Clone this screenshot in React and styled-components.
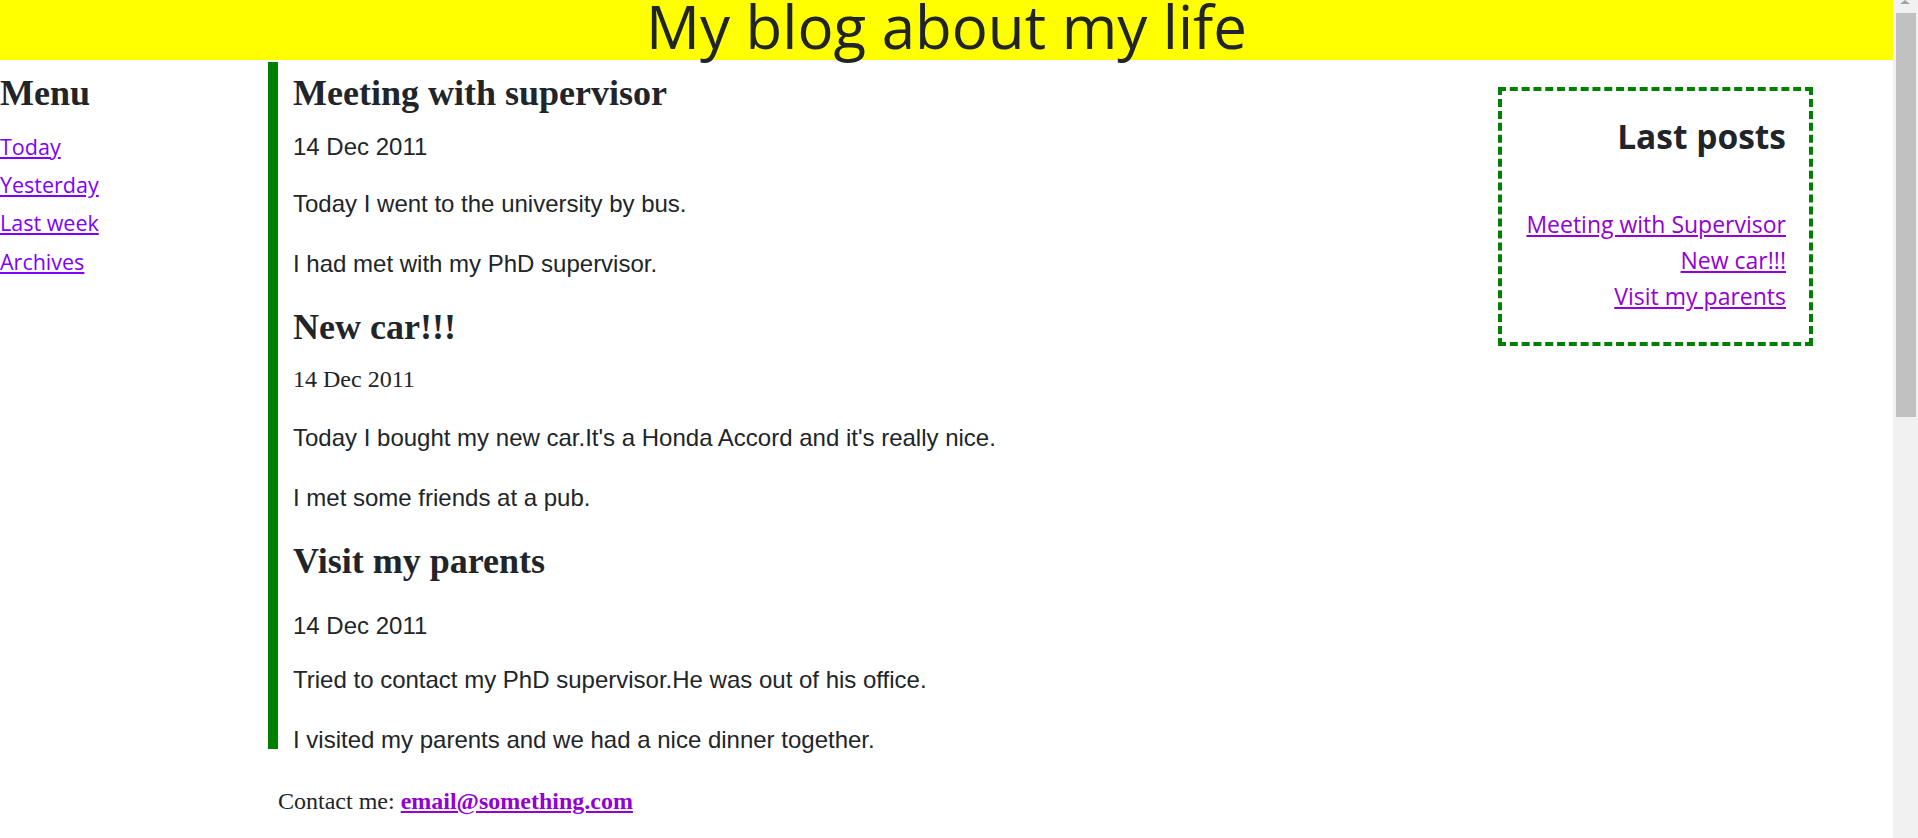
import React from 'react';
import styled, { createGlobalStyle } from 'styled-components';

const GlobalStyle = createGlobalStyle`
  html, body {
    margin: 0;
    padding: 0;
    background: #ffffff;
  }
  body {
    font-family: 'Open Sans', 'Noto Sans', sans-serif;
    font-size: 24px;
    color: #212529;
  }
`;

const Page = styled.div`
  margin-right: 25px;
`;

const Header = styled.header`
  background-color: #ffff00;
  height: 60px;
  text-align: center;
`;

const SiteTitle = styled.h1`
  margin: 0;
  font-size: 60px;
  font-weight: 500;
  line-height: 52px;
`;

const Row = styled.div`
  display: flex;
  align-items: flex-start;
  margin-top: 2px;
`;

const Nav = styled.nav`
  width: 268px;
  flex-shrink: 0;
  padding-top: 10px;
`;

const SerifHeading = styled.h2`
  font-family: 'Liberation Serif', 'Times New Roman', serif;
  font-weight: 700;
  font-size: 36px;
  line-height: 1.2;
  margin: 0 0 ${(p) => p.$gap || 0}px;
`;

const NavList = styled.ul`
  list-style: none;
  margin: 0;
  padding: 0;
`;

const NavLink = styled.a`
  font-size: 21.5px;
  line-height: 38.3px;
  color: #8000ff;
  text-decoration: underline;
`;

const Main = styled.main`
  flex: 1;
  height: 677px;
  padding: 10px 0 0 15px;
  border-left: 10px solid #008000;
`;

const PostDate = styled.p`
  font-family: ${(p) => (p.$serif ? "'Liberation Serif', 'Times New Roman', serif" : "'Liberation Sans', Arial, sans-serif")};
  font-size: 24px;
  line-height: 36px;
  margin: ${(p) => p.$top}px 0 ${(p) => p.$bottom}px;
`;

const Text = styled.p`
  font-family: 'Liberation Sans', Arial, sans-serif;
  font-size: 24px;
  line-height: 36px;
  margin: 0 0 24px;
`;

const Aside = styled.aside`
  width: 315px;
  flex-shrink: 0;
  box-sizing: border-box;
  margin: 25px 80px 0 0;
  padding: 22px 23px 28px;
  border: 4px dashed #008000;
  text-align: right;
`;

const AsideTitle = styled.h2`
  font-size: 33.5px;
  font-weight: 700;
  line-height: 1.2;
  margin: 3px 0 50px;
`;

const AsideLink = styled.a`
  display: block;
  font-size: 23px;
  line-height: 36px;
  color: #9400d3;
  text-decoration: underline;
`;

const Footer = styled.footer`
  margin: 34px 0 0 278px;
  font-family: 'Liberation Serif', 'Times New Roman', serif;
  font-size: 24px;
  line-height: 36px;
`;

const Email = styled.a`
  font-weight: 700;
  color: #9400d3;
  text-decoration: underline;
`;

const ScrollTrack = styled.div`
  position: fixed;
  top: 0;
  right: 0;
  width: 25px;
  height: 100vh;
  background: #f1f1f1;
`;

const ScrollArrow = styled.div`
  position: absolute;
  top: 0;
  left: 7px;
  width: 0;
  height: 0;
  border-left: 5px solid transparent;
  border-right: 5px solid transparent;
  border-bottom: 4px solid #a3a3a3;
`;

const ScrollThumb = styled.div`
  position: absolute;
  top: 13px;
  left: 3px;
  width: 20px;
  height: 404px;
  background: #c1c1c1;
`;

const menu = ['Today', 'Yesterday', 'Last week', 'Archives'];

const posts = [
  {
    title: 'Meeting with supervisor',
    date: { top: 14, bottom: 21 },
    text: ['Today I went to the university by bus.', 'I had met with my PhD supervisor.'],
  },
  {
    title: 'New car!!!',
    date: { top: 12, bottom: 23, serif: true },
    text: ["Today I bought my new car.It's a Honda Accord and it's really nice.", 'I met some friends at a pub.'],
  },
  {
    title: 'Visit my parents',
    date: { top: 24, bottom: 18 },
    text: ['Tried to contact my PhD supervisor.He was out of his office.', 'I visited my parents and we had a nice dinner together.'],
  },
];

const lastPosts = ['Meeting with Supervisor', 'New car!!!', 'Visit my parents'];

export default function App() {
  return (
    <Page>
      <GlobalStyle />
      <Header>
        <SiteTitle>My blog about my life</SiteTitle>
      </Header>
      <Row>
        <Nav>
          <SerifHeading $gap={12.5}>Menu</SerifHeading>
          <NavList>
            {menu.map((item) => (
              <li key={item}>
                <NavLink href="#">{item}</NavLink>
              </li>
            ))}
          </NavList>
        </Nav>
        <Main>
          {posts.map((post) => (
            <article key={post.title}>
              <SerifHeading>{post.title}</SerifHeading>
              <PostDate $top={post.date.top} $bottom={post.date.bottom} $serif={post.date.serif}>
                14 Dec 2011
              </PostDate>
              {post.text.map((t) => (
                <Text key={t}>{t}</Text>
              ))}
            </article>
          ))}
        </Main>
        <Aside>
          <AsideTitle>Last posts</AsideTitle>
          {lastPosts.map((item) => (
            <AsideLink key={item} href="#">{item}</AsideLink>
          ))}
        </Aside>
      </Row>
      <Footer>
        Contact me: <Email href="#">email@something.com</Email>
      </Footer>
      <ScrollTrack>
        <ScrollArrow />
        <ScrollThumb />
      </ScrollTrack>
    </Page>
  );
}
